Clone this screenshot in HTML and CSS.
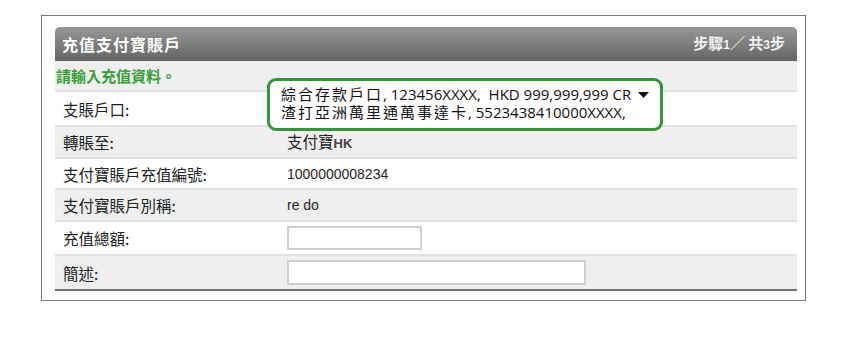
FILE: index.html
```html
<!DOCTYPE html>
<html lang="zh-HK">
<head>
    <meta charset="UTF-8">
    <meta name="viewport" content="width=device-width, initial-scale=1.0">
    <title>充值支付寶賬戶</title>
    <link rel="stylesheet" href="styles.css">
</head>
<body>
    <div class="frame">
        <div class="panel">
            <div class="panel-head">
                <span class="panel-title">充值支付寶賬戶</span>
                <span class="panel-step">步驟<b>1</b>／ 共<b>3</b>步</span>
            </div>
            <div class="notice">請輸入充值資料。</div>

            <div class="row select-row">
                <div class="label">支賬戶口:</div>
                <div class="value">
                    <div class="account-select">
                        <div class="opt"><span class="cjk">綜合存款戶口</span>, 123456XXXX,&nbsp; HKD 999,999,999 CR
                            <svg class="caret" width="11" height="6" viewBox="0 0 11 6"><path d="M0 0H11L5.5 6Z" fill="#111"/></svg>
                        </div>
                        <div class="opt"><span class="cjk">渣打亞洲萬里通萬事達卡</span>, 5523438410000XXXX,</div>
                    </div>
                </div>
            </div>

            <div class="row alt">
                <div class="label">轉賬至:</div>
                <div class="value">支付寶<span class="latin-bold">HK</span></div>
            </div>

            <div class="row short">
                <div class="label">支付寶賬戶充值編號:</div>
                <div class="value latin">1000000008234</div>
            </div>

            <div class="row alt">
                <div class="label">支付寶賬戶別稱:</div>
                <div class="value latin">re do</div>
            </div>

            <div class="row field-row">
                <div class="label">充值總額:</div>
                <div class="value"><input type="text" class="input-short"></div>
            </div>

            <div class="row alt field-row tall">
                <div class="label">簡述:</div>
                <div class="value"><input type="text" class="input-long"></div>
            </div>
        </div>
    </div>
</body>
</html>
```

FILE: styles.css
```css
body {
    margin: 0;
    background-color: #fff;
    font-family: "Noto Sans CJK TC", "Noto Sans", sans-serif;
    color: #222;
}
.frame {
    box-sizing: border-box;
    width: 765px;
    height: 286px;
    margin: 15px 0 0 41px;
    padding: 11px 8px 0 13px;
    border: 1px solid #7a7a7a;
}
.panel {
    border-bottom: 2px solid #6f6f6f;
}
.panel-head {
    height: 34px;
    display: flex;
    align-items: center;
    justify-content: space-between;
    padding: 0 12px 0 7px;
    border-radius: 5px 5px 0 0;
    background: linear-gradient(#979797, #656565);
    color: #fff;
    font-weight: bold;
    line-height: 20px;
}
.panel-title {
    font-size: 16px;
    letter-spacing: 1px;
}
.panel-step {
    font-size: 15px;
    color: #f2f2f2;
}
.panel-step b {
    font-family: "Liberation Sans", Arial, sans-serif;
    font-size: 12px;
}
.notice {
    height: 29px;
    display: flex;
    align-items: center;
    padding-left: 1px;
    background-color: #efefef;
    color: #35a035;
    font-size: 15px;
    font-weight: bold;
    line-height: 20px;
}
.row {
    box-sizing: border-box;
    height: 32px;
    display: grid;
    grid-template-columns: 232px 1fr;
    align-items: center;
    border-top: 2px solid #e1e1e1;
    background-color: #fff;
    line-height: 20px;
}
.row.alt {
    background-color: #efefef;
}
.row.short {
    height: 31px;
}
.row.field-row {
    height: 34px;
}
.row.tall {
    height: 35px;
}
.row.select-row {
    height: 35px;
}
.label {
    padding-left: 8px;
    font-size: 15.5px;
    color: #222;
}
.value {
    font-size: 15.5px;
    color: #222;
}
.latin {
    font-family: "Liberation Sans", Arial, sans-serif;
    font-size: 14px;
    color: #2e2424;
}
.latin-bold {
    font-family: "Liberation Sans", Arial, sans-serif;
    font-size: 13px;
    font-weight: bold;
    color: #444;
}
/* 下拉選單 (綠框標示) */
.select-row .value {
    align-self: start;
}
.account-select {
    position: relative;
    z-index: 1;
    box-sizing: border-box;
    width: 396px;
    height: 53px;
    margin: -14px 0 -20px -20px;
    padding: 4px 11px 0;
    border: 3px solid #2f9a35;
    border-radius: 9px;
    background-color: #fff;
    font-family: "Open Sans", "Noto Sans CJK TC", sans-serif;
    font-size: 15px;
    line-height: 17.5px;
    color: #111;
    white-space: nowrap;
}
.account-select .opt {
    height: 17.5px;
}
.account-select .cjk {
    font-family: "Noto Sans CJK TC", sans-serif;
    letter-spacing: 2px;
}
.caret {
    margin-left: 3px;
    vertical-align: 2px;
}
input[type="text"] {
    box-sizing: border-box;
    margin: 0;
    border: 2px solid #cfcfcf;
    background-color: #fff;
    display: block;
}
.input-short {
    width: 135px;
    height: 24px;
}
.input-long {
    width: 299px;
    height: 25px;
}
```
